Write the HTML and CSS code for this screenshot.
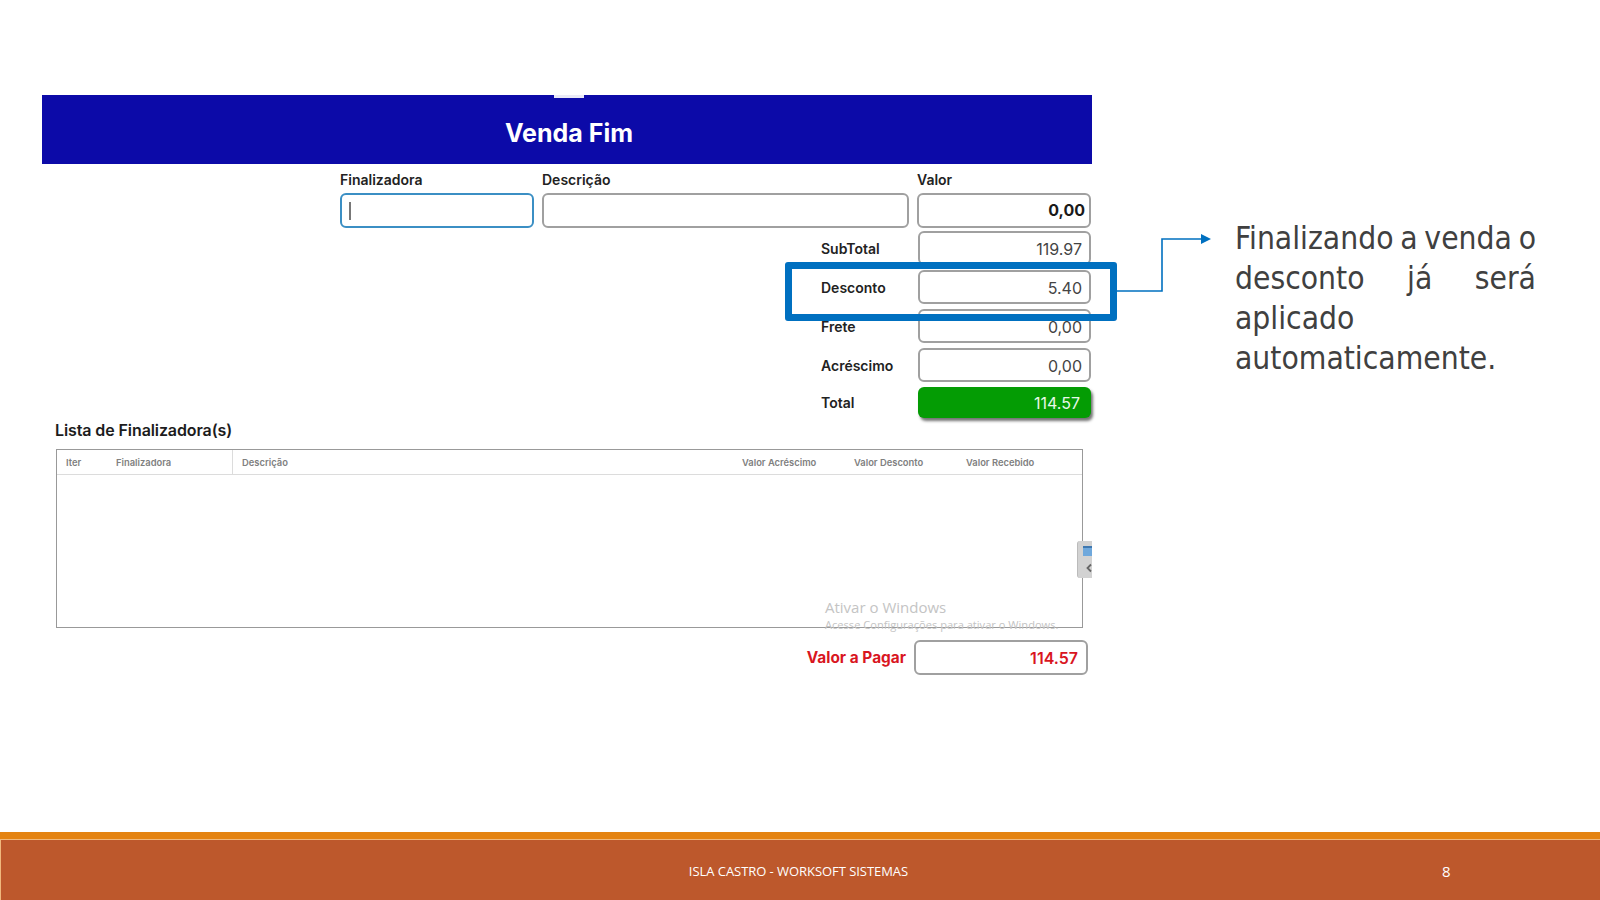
FILE: index.html
```html
<!DOCTYPE html>
<html lang="pt-BR">
<head>
<meta charset="utf-8">
<title>Venda Fim</title>
<link rel="stylesheet" href="styles.css">
</head>
<body>
<div class="slide">
  <main class="content">
    <section class="panel">
      <span class="tab"></span>
      <h1 class="banner">Venda Fim</h1>
      <div class="entry">
        <div class="entry-col"><label class="lbl">Finalizadora</label><div class="box box-focus"><span class="caret"></span></div></div>
        <div class="entry-col"><label class="lbl">Descrição</label><div class="box"></div></div>
        <div class="entry-col"><label class="lbl">Valor</label><div class="box box-bold">0,00</div></div>
      </div>
      <div class="totals">
        <div class="row"><span class="lbl">SubTotal</span><div class="box box-val">119.97</div></div>
        <div class="row"><span class="lbl">Desconto</span><div class="box box-val">5.40</div></div>
        <div class="row"><span class="lbl">Frete</span><div class="box box-val">0,00</div></div>
        <div class="row"><span class="lbl">Acréscimo</span><div class="box box-val">0,00</div></div>
        <div class="row"><span class="lbl">Total</span><div class="box box-total">114.57</div></div>
      </div>
      <h2 class="list-title">Lista de Finalizadora(s)</h2>
      <div class="grid">
        <div class="grid-head">
          <span class="c-iter">Iter</span>
          <span class="c-fin">Finalizadora</span>
          <span class="c-desc">Descrição</span>
          <span class="c-acr">Valor Acréscimo</span>
          <span class="c-dsc">Valor Desconto</span>
          <span class="c-rec">Valor Recebido</span>
        </div>
        <div class="watermark">
          <div class="wm-big">Ativar o Windows</div>
          <div class="wm-small">Acesse Configurações para ativar o Windows.</div>
        </div>
      </div>
      <div class="pay">
        <span class="pay-label">Valor a Pagar</span>
        <div class="box box-pay">114.57</div>
      </div>
      <div class="side-tab">
        <svg class="side-icon" viewBox="0 0 10 12" width="10" height="12"><rect x="1" y="1" width="9" height="10" fill="#6fa8dc"/><rect x="1" y="1" width="9" height="2" fill="#3f78b0"/></svg>
        <svg class="side-chev" viewBox="0 0 6 10" width="6" height="10"><path d="M5 1.5 1.5 5 5 8.5" fill="none" stroke="#666" stroke-width="1.8"/></svg>
      </div>
      <div class="highlight"></div>
      <svg class="arrow" width="95" height="62" viewBox="0 0 95 62">
        <path d="M0 60H45V8H85" fill="none" stroke="#0070c0" stroke-width="1.6"/>
        <path d="M84 3 94 8 84 13Z" fill="#0070c0"/>
      </svg>
    </section>
    <p class="note">Finalizando a venda o desconto já será aplicado automaticamente.</p>
  </main>
  <footer class="footer">
    <span class="foot-text">ISLA CASTRO - WORKSOFT SISTEMAS</span>
    <span class="foot-num">8</span>
  </footer>
</div>
</body>
</html>
```
FILE: styles.css
```css
* { box-sizing: border-box; }
html, body { margin: 0; padding: 0; background: #fff; }
.slide {
  width: 1600px; height: 900px; display: flex; flex-direction: column;
  overflow: hidden; font-family: Inter, "Liberation Sans", sans-serif;
}
.content { height: 832px; display: flex; padding: 95px 0 0 42px; }
.panel { position: relative; width: 1050px; flex: none; }
.banner {
  margin: 0; height: 69px; background: #0c0aa8; color: #fff;
  font-size: 25px; font-weight: 700; line-height: 76px; text-align: center;
  padding-left: 4px;
}
.tab { position: absolute; left: 512px; top: 0; width: 30px; height: 3px; background: #eaeaf6; }
.entry { display: grid; grid-template-columns: 194px 367px 174px; column-gap: 8px; padding: 7px 0 0 298px; }
.entry-col { display: flex; flex-direction: column; }
.lbl { font-size: 14px; font-weight: 600; color: #222; line-height: 17px; }
.entry-col .lbl { margin-bottom: 5px; }
.entry-col .box { height: 35px; }
.box {
  height: 34px; border: 2px solid #a0a0a0; border-radius: 6px; background: #fff;
  display: flex; align-items: center; justify-content: flex-end;
  padding: 2px 7px 0; font-size: 16px; color: #444;
}
.entry-col .box-focus { border-color: #3b8fc4; justify-content: flex-start; padding: 0 7px; }
.caret { width: 2px; height: 18px; background: #777; }
.entry-col .box-bold { font-weight: 700; color: #1a1a1a; padding: 0 4px 2px 0; font-size: 16px; }
.totals { display: flex; flex-direction: column; gap: 5px; margin-top: 3px; padding-left: 779px; }
.row { display: flex; align-items: center; }
.row .lbl { width: 97px; flex: none; }
.box-val { width: 173px; }
.box-total {
  width: 173px; height: 31px; background: #049c04; border: 0; color: #e8f8e8;
  padding: 1px 11px 0 0;
  box-shadow: 2px 3px 3px rgba(0,0,0,.55);
}
.list-title { margin: 2px 0 0 13px; font-size: 16px; font-weight: 600; color: #1c1c1c; line-height: 20px; letter-spacing: -.1px; }
.grid { position: relative; width: 1027px; height: 179px; margin: 9px 0 0 14px; border: 1px solid #999; }
.grid-head {
  display: grid; height: 25px; border-bottom: 1px solid #dcdcdc; align-items: center;
  grid-template-columns: 50px 117px 509px 112px 112px 1fr;
  font-size: 9.4px; font-weight: 600; color: #808080; padding-left: 9px;
}
.c-fin { border-right: 1px solid #dcdcdc; align-self: stretch; display: flex; align-items: center; }
.c-desc { padding-left: 9px; }
.watermark { position: absolute; left: 768px; top: 148px; color: #c4c4c4; font-family: "Open Sans", sans-serif; white-space: nowrap; }
.wm-big { font-size: 15px; line-height: 19px; }
.wm-small { font-size: 11.1px; line-height: 14px; margin-top: 1px; }
.pay { display: flex; align-items: center; justify-content: flex-end; gap: 8px; margin: 12px 4px 0 0; }
.pay-label { font-size: 15.4px; font-weight: 700; color: #d9161f; }
.box-pay { width: 174px; height: 35px; color: #d9161f; font-weight: 600; padding: 1px 8px 0 0; }
.side-tab {
  position: absolute; left: 1035px; top: 446px; width: 15px; height: 37px;
  background: #d2d2d2; border-radius: 3px 0 0 3px; border-left: 1px solid #bbb;
  display: flex; flex-direction: column; align-items: flex-end; padding-top: 4px; gap: 6px;
}
.highlight { position: absolute; left: 743px; top: 167px; width: 332px; height: 59px; border: 7px solid #0070c0; border-radius: 3px; }
.arrow { position: absolute; left: 1075px; top: 136px; overflow: visible; }
.note {
  margin: 123px 0 0 143px; width: 301px; flex: none; align-self: flex-start;
  font-family: "DejaVu Sans", sans-serif; font-stretch: condensed; font-size: 31.5px; line-height: 40px;
  word-spacing: -4px; color: #404040; text-align: justify;
}
.footer {
  flex: 1; background: #bd582c; position: relative;
  border-top: 7px solid #e48312; box-shadow: inset 1px 1px 0 #f0b87c;
  color: #fff; font-family: "Open Sans", sans-serif; font-size: 13px; letter-spacing: -.05px;
  display: flex; justify-content: center; align-items: center; padding: 2px 3px 0 0;
}
.foot-num { position: absolute; left: 1442px; font-size: 15px; }
```
